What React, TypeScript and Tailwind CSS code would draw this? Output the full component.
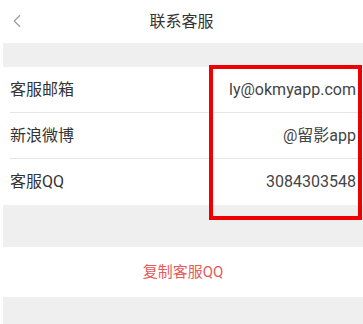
import { ChevronLeft } from 'lucide-react';

const rows = [
  { label: '客服邮箱', value: 'ly@okmyapp.com' },
  { label: '新浪微博', value: '@留影app' },
  { label: '客服QQ', value: '3084303548' },
];

export default function App() {
  return (
    <div
      className="relative w-[363px] h-[324px] overflow-hidden bg-white pl-[3px]"
      style={{ fontFamily: '"Roboto", "Noto Sans CJK SC", sans-serif' }}
    >
      {/* Header */}
      <header className="h-[43px] flex items-center relative">
        <ChevronLeft className="absolute left-[3px] top-[10px] w-[22px] h-[22px] text-[#9a9a9a]" strokeWidth={1.2} />
        <h1 className="w-full text-center text-[16px] text-[#333] pr-[3px]">联系客服</h1>
      </header>

      <div className="h-[24px] bg-[#efefef]" />

      {/* Contact rows */}
      <section className="bg-white pl-[7px]">
        {rows.map((row, i) => (
          <div
            key={row.label}
            className={
              'h-[46px] flex items-center justify-between pr-[7px] text-[16px] text-[#333] ' +
              (i < rows.length - 1 ? 'border-b border-[#e6e6e6]' : '')
            }
          >
            <span>{row.label}</span>
            <span className="text-[#444]">{row.value}</span>
          </div>
        ))}
      </section>

      <div className="h-[42px] bg-[#efefef]" />

      {/* Copy button */}
      <button className="w-full h-[50px] flex items-center justify-center text-[15px] text-[#e65b5b] bg-white">
        复制客服QQ
      </button>

      <div className="h-[30px] bg-[#efefef]" />

      {/* Annotation box */}
      <div className="absolute left-[209px] top-[65px] w-[153px] h-[155px] border-[4px] border-[#ee0000]" />
    </div>
  );
}
